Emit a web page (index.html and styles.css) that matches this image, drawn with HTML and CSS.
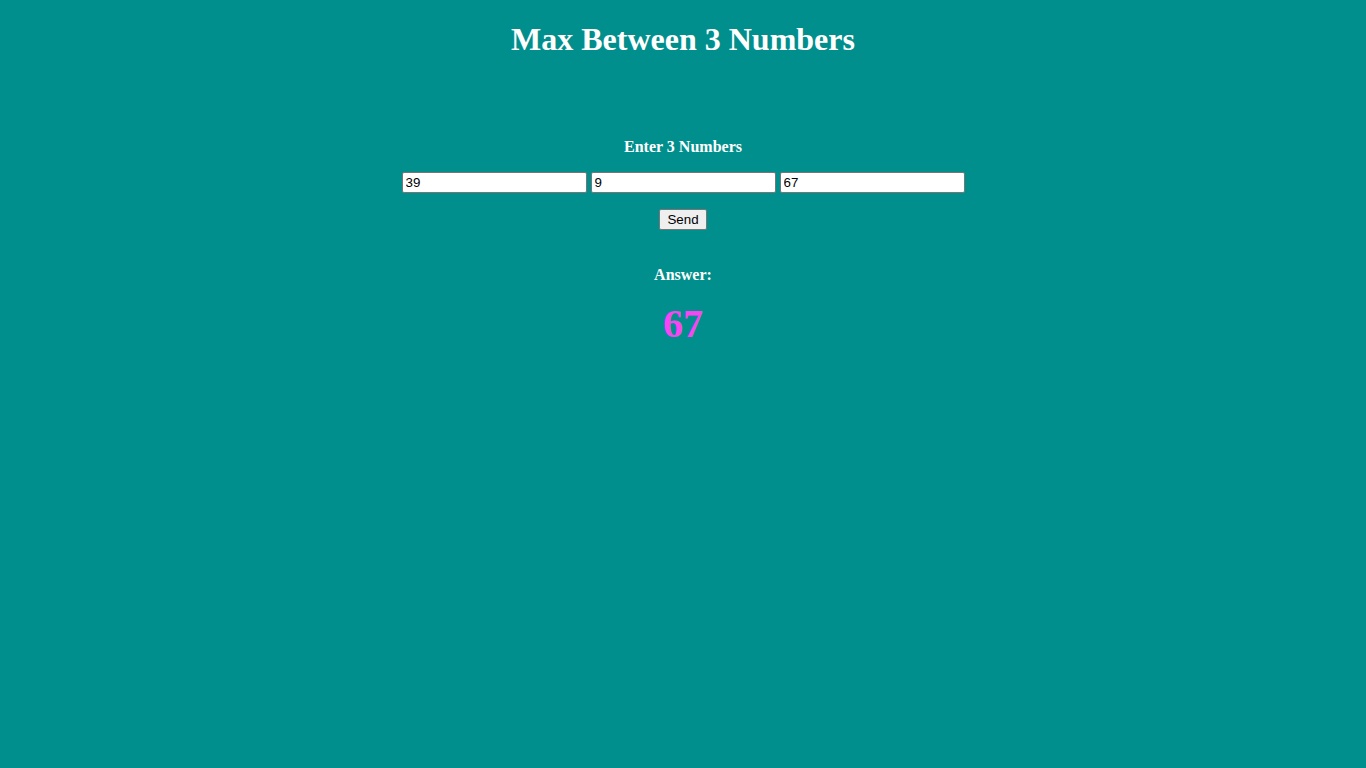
FILE: index.html
```html
<!DOCTYPE html>
<html>
<head>
<meta charset="utf-8">
<title>Max Between 3 Numbers</title>
<link rel="stylesheet" href="styles.css">
</head>
<body>
<main class="page">
  <h1 class="title">Max Between 3 Numbers</h1>
  <h4 class="label">Enter 3 Numbers</h4>
  <div class="inputs">
    <input class="num" type="text" value="39">
    <input class="num" type="text" value="9">
    <input class="num" type="text" value="67">
  </div>
  <button class="send" type="button">Send</button>
  <h4 class="label answer-label">Answer:</h4>
  <div class="answer">67</div>
</main>
</body>
</html>
```
FILE: styles.css
```css
html, body {
  margin: 0;
  padding: 0;
  background: #008f8c;
}
body {
  font-family: "Liberation Serif", "Times New Roman", serif;
  color: #ffffff;
  min-height: 768px;
}
.page {
  display: flex;
  flex-direction: column;
  align-items: center;
  padding-top: 21px;
}
.title {
  font-size: 32px;
  font-weight: bold;
  line-height: 37px;
  margin: 0;
}
.label {
  font-size: 16px;
  font-weight: bold;
  line-height: 18px;
  margin: 80px 0 0;
}
.inputs {
  display: flex;
  gap: 4px;
  margin-top: 16px;
}
.num {
  box-sizing: border-box;
  width: 185px;
  height: 21px;
  margin: 0;
  padding: 1px 3px;
  border: 1px solid #767676;
  border-radius: 2px;
  background: #ffffff;
  color: #000000;
  font-family: "Liberation Sans", Arial, sans-serif;
  font-size: 13.33px;
}
.send {
  box-sizing: border-box;
  width: 48px;
  height: 21px;
  margin-top: 16px;
  padding: 1px 6px;
  border: 1px solid #767676;
  border-radius: 2px;
  background: #efefef;
  color: #000000;
  font-family: "Liberation Sans", Arial, sans-serif;
  font-size: 13.33px;
}
.answer-label {
  margin-top: 36px;
}
.answer {
  font-size: 40px;
  font-weight: bold;
  line-height: 46px;
  margin-top: 17px;
  color: #f845f3;
}
```
